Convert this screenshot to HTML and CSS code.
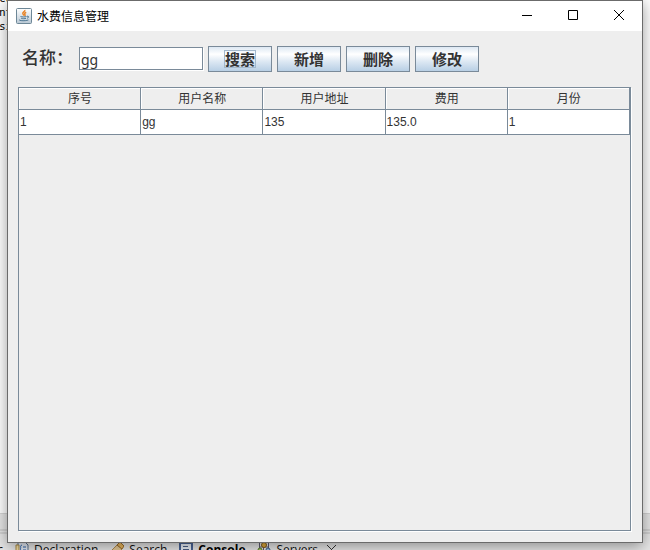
FILE: index.html
```html
<!DOCTYPE html>
<html lang="zh-CN">
<head>
  <meta charset="UTF-8">
  <meta name="viewport" content="width=device-width, initial-scale=1.0">
  <title>水费信息管理</title>
  <link rel="stylesheet" href="styles.css">
</head>
<body>

  <!-- IDE behind the dialog -->
  <div class="ide">
    <div class="editor">
      <div class="code">cu</div>
      <div class="code">nt</div>
      <div class="code">si</div>
    </div>
    <div class="sash"></div>
    <div class="views">
      <span class="view view-first">c</span>
      <span class="view">
        <svg width="14" height="16" viewBox="0 0 14 16">
          <path d="M3 1h7l3 3v11H3z" fill="#e3e9f2" stroke="#5b7290"/>
          <path d="M1 4h3v9H1z" fill="#f4dfa5" stroke="#a98a45"/>
          <path d="M7 4c-3 1 0 3-2 4 2 1-1 3 2 4M8 6h3M8 9h3" fill="none" stroke="#2e62a8"/>
        </svg>
        Declaration
      </span>
      <span class="view">
        <svg width="14" height="16" viewBox="0 0 14 16">
          <path d="M1 10l6-6 5 4-6 6z" fill="#e3c795" stroke="#b08a50"/>
          <path d="M7 4l3-3 4 4-2 3z" fill="#e9b75e" stroke="#9a6d2c"/>
          <path d="M0 11l2-2 4 4-2 2z" fill="#77706c"/>
        </svg>
        Search
      </span>
      <span class="view view-active">
        <svg width="14" height="16" viewBox="0 0 14 16">
          <path d="M1 2h12v12H1z" fill="#e9eef6" stroke="#4a6496" stroke-width="2"/>
          <path d="M4 5.500h5M4 8.500h6" stroke="#4a5f86"/>
        </svg>
        Console
      </span>
      <span class="view">
        <svg width="14" height="16" viewBox="0 0 14 16">
          <path d="M2.500 0v8M6.500 3v8M11.500 0v8M2 6h10" stroke="#5d5870" fill="none"/>
          <circle cx="7" cy="4" r="2.500" fill="#e0a93c" stroke="#7c5b1c"/>
          <circle cx="3" cy="9" r="2" fill="#a3c964" stroke="#5d7a2c"/>
          <circle cx="11" cy="9" r="2" fill="#9dc1e4" stroke="#3e618a"/>
        </svg>
        Servers
        <svg class="view-close" width="9" height="9" viewBox="0 0 9 9"><path d="M0 0l9 9M9 0l-9 9" stroke="#333"/></svg>
      </span>
    </div>
  </div>

  <div class="window">
    <div class="titlebar">
      <svg width="16" height="16" viewBox="0 0 16 16">
        <defs>
          <linearGradient id="tile" x1="0" y1="0" x2="0" y2="1">
            <stop offset="0" stop-color="#ffffff"/>
            <stop offset="1" stop-color="#b9c8d4"/>
          </linearGradient>
        </defs>
        <rect x="0.5" y="0.5" width="15" height="15" rx="1" fill="url(#tile)" stroke="#6d8797"/>
        <path d="M8.800 2c.5 1.600-2.400 2.200-2 3.600.2.800 1.200 1.200 1.200 2.200M10.200 4.200C8.500 5 8.300 5.900 9 6.700c.3.500 0 1-.3 1.200" fill="none" stroke="#e8862b" stroke-width="1.500"/>
        <path d="M4.500 8.500c1.500.6 4.500.6 6 0M5.200 10.300c1.400.5 3.600.5 4.800 0M3.300 11.700c-.9.900 5.600 1.700 9.200.2M11 8.300c2.200-.7 2 1.600 0 1.900" fill="none" stroke="#4d7693"/>
      </svg>
      <span class="title">水费信息管理</span>
      <button class="control" aria-label="最小化"><svg width="11" height="11" viewBox="0 0 11 11"><path d="M0 5.500h10" stroke="#000"/></svg></button>
      <button class="control" aria-label="最大化"><svg width="11" height="11" viewBox="0 0 11 11"><path d="M.5.5h9v9h-9z" fill="none" stroke="#000"/></svg></button>
      <button class="control" aria-label="关闭"><svg width="11" height="11" viewBox="0 0 11 11"><path d="M0 0l10 10M10 0L0 10" stroke="#000"/></svg></button>
    </div>

    <form class="toolbar">
      <label for="name">名称：</label>
      <input type="text" id="name" value="gg">
      <button type="button" class="btn"><span class="focus">搜索</span></button>
      <button type="button" class="btn">新增</button>
      <button type="button" class="btn">删除</button>
      <button type="button" class="btn">修改</button>
    </form>

    <div class="scroll-pane">
      <table>
        <thead>
          <tr>
            <th>序号</th>
            <th>用户名称</th>
            <th>用户地址</th>
            <th>费用</th>
            <th>月份</th>
          </tr>
        </thead>
        <tbody>
          <tr>
            <td>1</td>
            <td>gg</td>
            <td>135</td>
            <td>135.0</td>
            <td>1</td>
          </tr>
        </tbody>
      </table>
    </div>
  </div>

</body>
</html>
```
FILE: styles.css
```css
* {
  box-sizing: border-box;
}

body {
  margin: 0;
  height: 100vh;
  position: relative;
  overflow: hidden;
  font-family: "Liberation Sans", "Noto Sans CJK SC", sans-serif;
  font-size: 12px;
  color: #333;
}

svg {
  flex: none;
}

/* IDE in the background */
.ide {
  height: 100%;
  display: flex;
  flex-direction: column;
  background-color: #e6e6e6;
}

.editor {
  flex: 1;
  min-height: 0;
  margin-top: -8px;
  background-color: #fff;
}

.code {
  height: 14px;
  margin-left: -1px;
  line-height: 14px;
  font-family: "DejaVu Sans Mono", monospace;
  font-size: 11px;
  color: #000;
}

.sash {
  height: 21px;
  background-color: #e6e6e6;
  border-top: 1px solid #d5d5d5;
  border-bottom: 5px double #d2d2d2;
}

.views {
  height: 16px;
  display: flex;
  align-items: flex-start;
  gap: 12px;
  padding-top: 6px;
  overflow: hidden;
  background-color: #e6e6e6;
}

.view {
  display: flex;
  align-items: center;
  gap: 5px;
  height: 18px;
  font-family: "Open Sans", sans-serif;
  font-size: 12px;
  white-space: nowrap;
  color: #111;
}

.view-first {
  width: 3px;
  justify-content: flex-end;
}

.view-active {
  font-weight: bold;
  color: #000;
}

.view-close {
  margin-left: 4px;
}

/* Dialog */
.window {
  position: absolute;
  top: 0;
  left: 7px;
  right: 7px;
  bottom: 7px;
  display: flex;
  flex-direction: column;
  background-color: #eee;
  border: 1px solid #6b6b6b;
  box-shadow: 0 3px 14px rgba(0, 0, 0, 0.4);
}

.titlebar {
  height: 30px;
  display: flex;
  align-items: center;
  padding-left: 8px;
  background-color: #fff;
}

.title {
  flex: 1;
  margin-left: 5px;
  padding-bottom: 2px;
  color: #000;
}

.control {
  width: 46px;
  height: 30px;
  padding: 0 0 1px;
  border: none;
  background: none;
  display: flex;
  align-items: center;
  justify-content: center;
}

.toolbar {
  display: flex;
  align-items: center;
  gap: 5px;
  padding: 15px 14px;
}

.toolbar label {
  width: 52px;
  font-size: 17px;
  font-weight: 500;
  line-height: 26px;
  white-space: nowrap;
}

.toolbar input {
  width: 124px;
  height: 23px;
  margin-bottom: 2px;
  padding: 2px 1px 0;
  border: 1px solid #7a8a99;
  box-shadow: 1px 1px 0 #fff;
  font-family: "Noto Sans", sans-serif;
  font-size: 14px;
  color: #333;
}

.btn {
  width: 64px;
  height: 26px;
  padding: 0;
  border: 1px solid #7a8a99;
  background: linear-gradient(#dde8f3, #fff 30%, #dde8f3 60%, #b8cfe5);
  font-family: "Noto Sans CJK SC", sans-serif;
  font-size: 15px;
  font-weight: bold;
  line-height: 16px;
  color: #333;
}

.focus {
  display: inline-block;
  outline: 1px solid #a3b8cc;
}

.scroll-pane {
  flex: 1;
  min-height: 0;
  margin: 0 11px 11px 10px;
  border: 1px solid #7a8a99;
  box-shadow: 1px 1px 0 #fff;
}

table {
  width: 100%;
  table-layout: fixed;
  border-collapse: separate;
  border-spacing: 0;
}

th,
td {
  border-right: 1px solid #7a8a99;
  border-bottom: 1px solid #7a8a99;
}

th {
  height: 22px;
  padding: 2px 0 0 1px;
  font-weight: normal;
  line-height: 19px;
  box-shadow: inset 1px 1px 0 #fff;
}

td {
  height: 25px;
  padding: 0 1px;
  line-height: 20px;
  background-color: #fff;
}
```
